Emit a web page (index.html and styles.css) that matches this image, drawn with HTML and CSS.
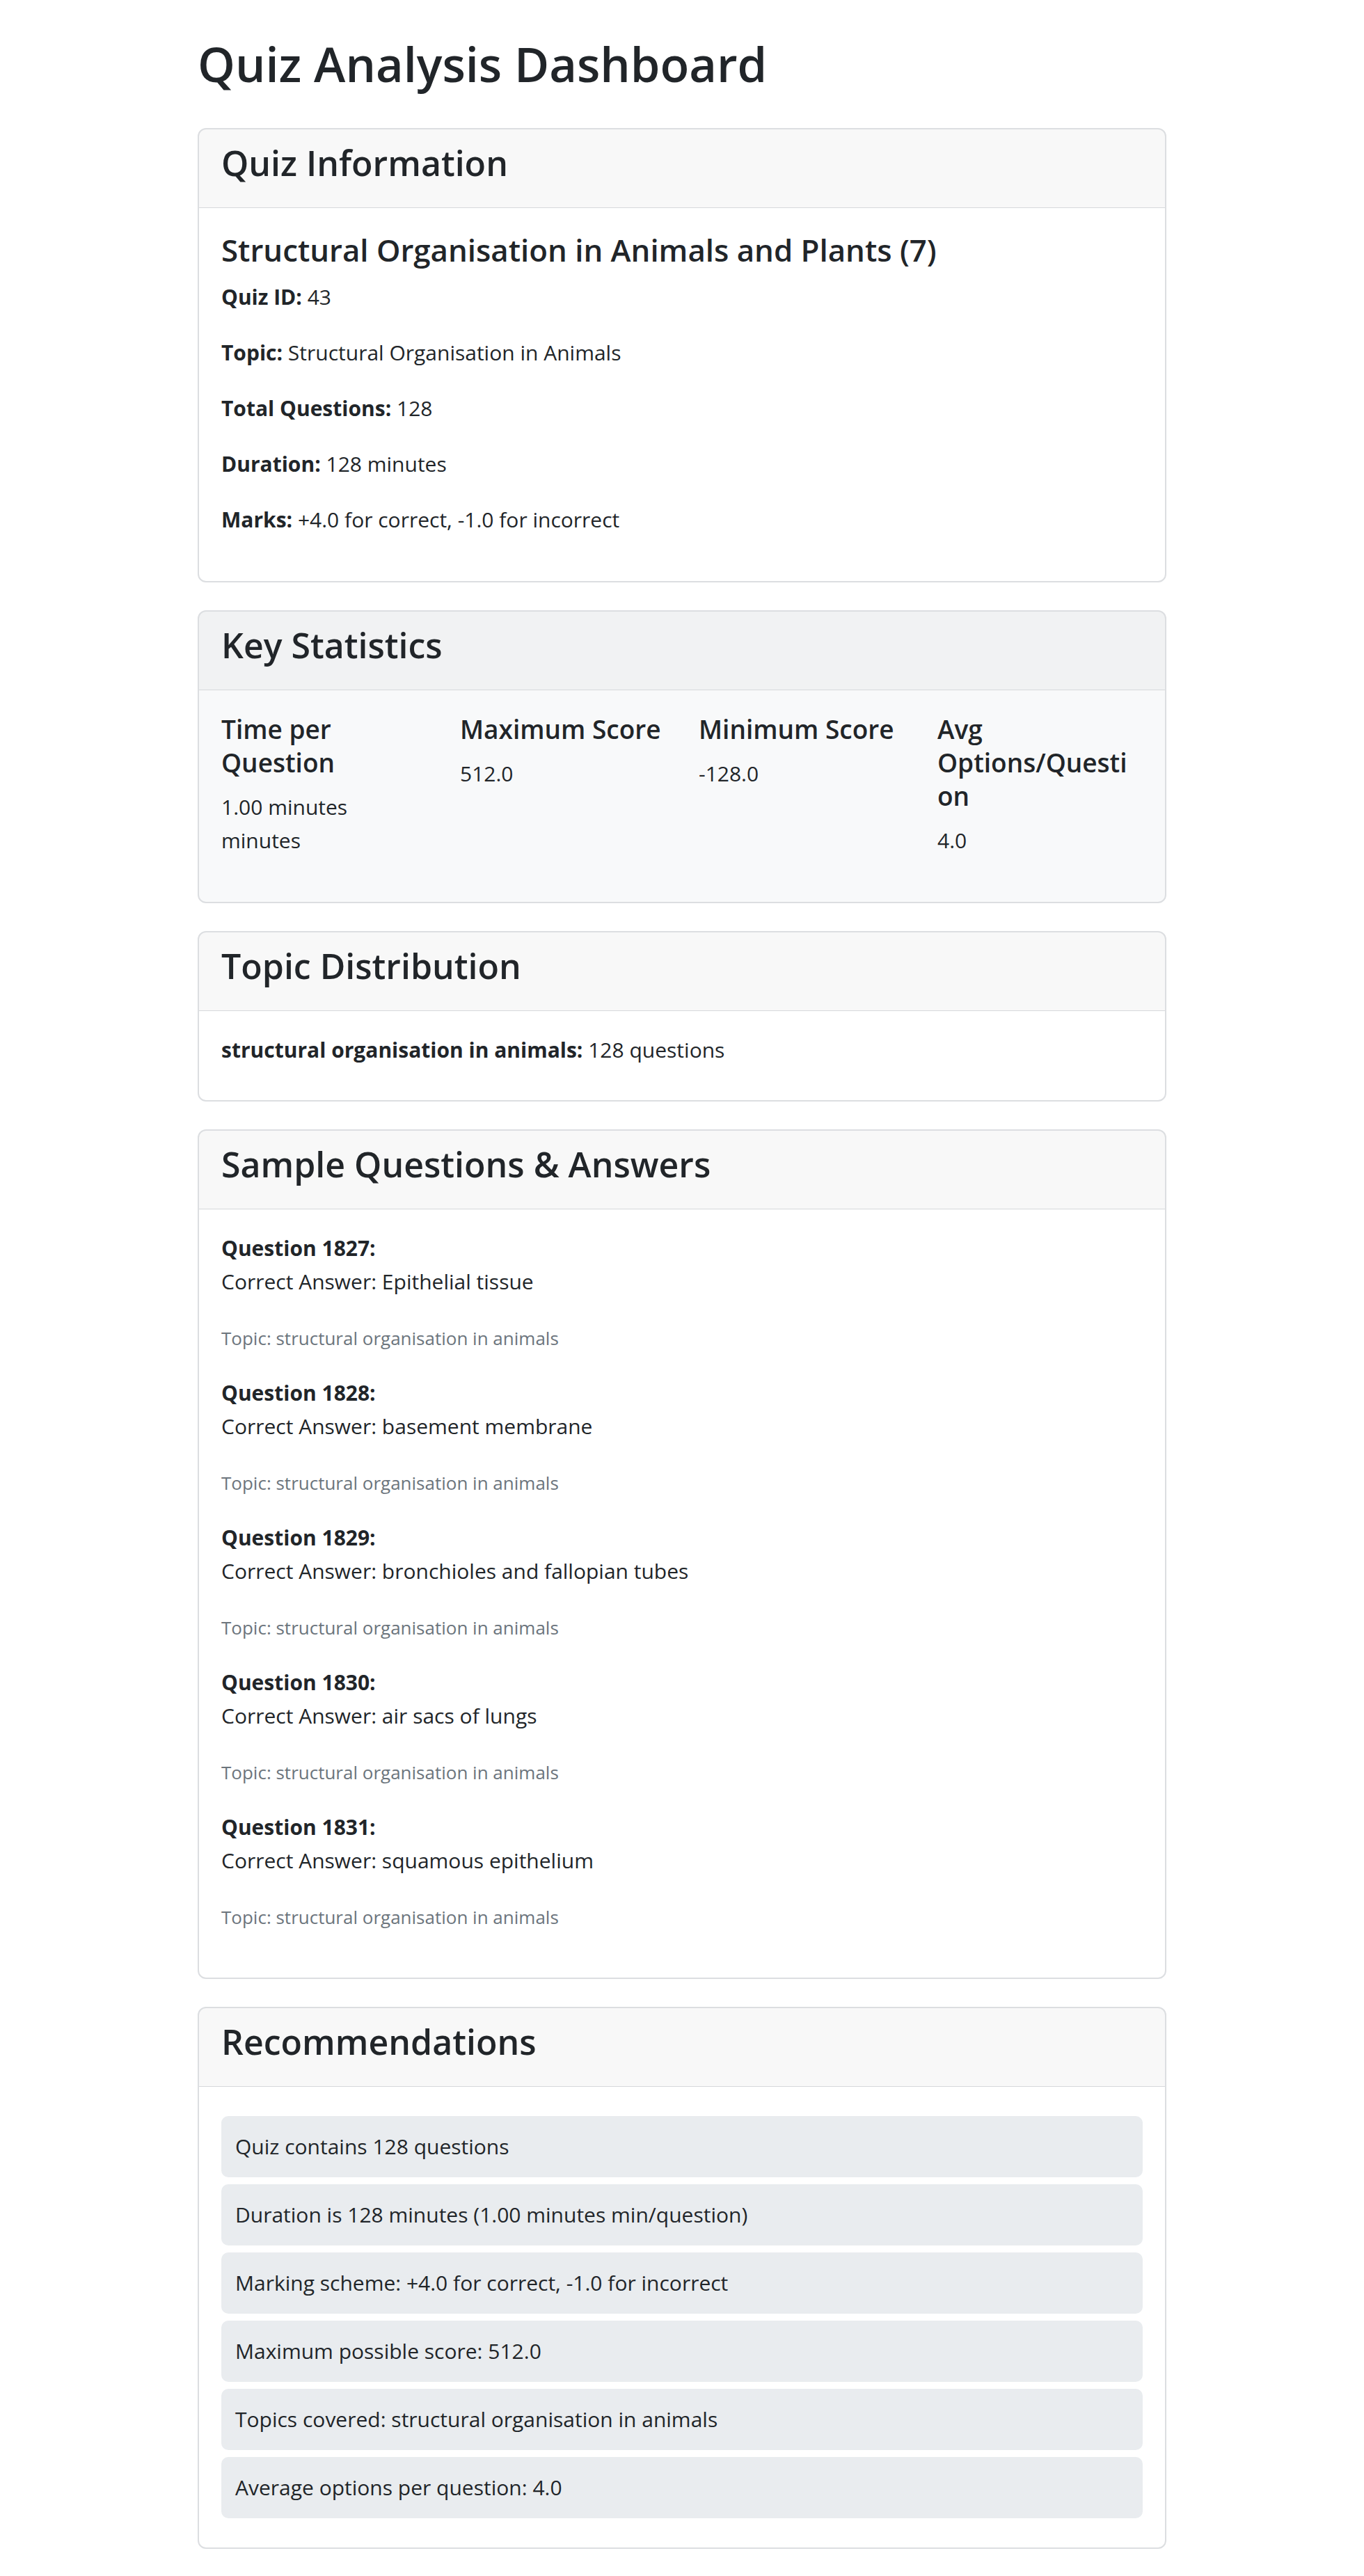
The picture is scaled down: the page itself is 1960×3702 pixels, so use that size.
FILE: index.html
```html
<!DOCTYPE html>
<html lang="en">
<head>
<meta charset="utf-8">
<title>Quiz Analysis Dashboard</title>
<link rel="stylesheet" href="styles.css">
</head>
<body>
<div class="dashboard">
  <h1 class="page-title">Quiz Analysis Dashboard</h1>

  <section class="card">
    <div class="card-header"><h3 class="card-title">Quiz Information</h3></div>
    <div class="card-body">
      <h4 class="quiz-name">Structural Organisation in Animals and Plants (7)</h4>
      <p class="line"><strong>Quiz ID:</strong> 43</p>
      <p class="line"><strong>Topic:</strong> Structural Organisation in Animals</p>
      <p class="line"><strong>Total Questions:</strong> 128</p>
      <p class="line"><strong>Duration:</strong> 128 minutes</p>
      <p class="line"><strong>Marks:</strong> +4.0 for correct, -1.0 for incorrect</p>
    </div>
  </section>

  <section class="card card-light">
    <div class="card-header"><h3 class="card-title">Key Statistics</h3></div>
    <div class="card-body">
      <div class="stats-row">
        <div class="stat">
          <h5 class="stat-label">Time per Question</h5>
          <p class="line">1.00 minutes minutes</p>
        </div>
        <div class="stat">
          <h5 class="stat-label">Maximum Score</h5>
          <p class="line">512.0</p>
        </div>
        <div class="stat">
          <h5 class="stat-label">Minimum Score</h5>
          <p class="line">-128.0</p>
        </div>
        <div class="stat">
          <h5 class="stat-label">Avg Options/Question</h5>
          <p class="line">4.0</p>
        </div>
      </div>
    </div>
  </section>

  <section class="card">
    <div class="card-header"><h3 class="card-title">Topic Distribution</h3></div>
    <div class="card-body">
      <div class="topic-line"><strong>structural organisation in animals:</strong> 128 questions</div>
    </div>
  </section>

  <section class="card">
    <div class="card-header"><h3 class="card-title">Sample Questions &amp; Answers</h3></div>
    <div class="card-body">
      <div class="qa">
        <p class="line"><strong>Question 1827:</strong><br>Correct Answer: Epithelial tissue</p>
        <p class="line qa-topic"><small class="muted">Topic: structural organisation in animals</small></p>
      </div>
      <div class="qa">
        <p class="line"><strong>Question 1828:</strong><br>Correct Answer: basement membrane</p>
        <p class="line qa-topic"><small class="muted">Topic: structural organisation in animals</small></p>
      </div>
      <div class="qa">
        <p class="line"><strong>Question 1829:</strong><br>Correct Answer: bronchioles and fallopian tubes</p>
        <p class="line qa-topic"><small class="muted">Topic: structural organisation in animals</small></p>
      </div>
      <div class="qa">
        <p class="line"><strong>Question 1830:</strong><br>Correct Answer: air sacs of lungs</p>
        <p class="line qa-topic"><small class="muted">Topic: structural organisation in animals</small></p>
      </div>
      <div class="qa">
        <p class="line"><strong>Question 1831:</strong><br>Correct Answer: squamous epithelium</p>
        <p class="line qa-topic"><small class="muted">Topic: structural organisation in animals</small></p>
      </div>
    </div>
  </section>

  <section class="card">
    <div class="card-header"><h3 class="card-title">Recommendations</h3></div>
    <div class="card-body">
      <ul class="recs">
        <li class="rec">Quiz contains 128 questions</li>
        <li class="rec">Duration is 128 minutes (1.00 minutes min/question)</li>
        <li class="rec">Marking scheme: +4.0 for correct, -1.0 for incorrect</li>
        <li class="rec">Maximum possible score: 512.0</li>
        <li class="rec">Topics covered: structural organisation in animals</li>
        <li class="rec">Average options per question: 4.0</li>
      </ul>
    </div>
  </section>
</div>
</body>
</html>
```

FILE: styles.css
```css
html, body {
  margin: 0;
  padding: 0;
  background: #ffffff;
}

body {
  font-family: "Open Sans", "Noto Sans", sans-serif;
  font-size: 30px;
  line-height: 48px;
  color: #212529;
}

.dashboard {
  width: 1392px;
  margin: 0 auto;
  padding-top: 48px;
}

.page-title {
  margin: 0 0 48px;
  font-size: 68.5px;
  line-height: 88px;
  font-weight: 600;
}

.card {
  border: 2px solid #dcdee1;
  border-radius: 12px;
  background: #ffffff;
  margin-bottom: 40px;
  overflow: hidden;
  overflow-wrap: break-word;
}

.card-light {
  background: #f8f9fa;
}

.card-header {
  padding: 16px 32px;
  background: rgba(33, 37, 41, 0.03);
  border-bottom: 1px solid #d6d8db;
}

.card-title {
  margin: 0 0 16px;
  font-size: 50px;
  line-height: 64px;
  font-weight: 600;
}

.card-body {
  padding: 32px;
}

.quiz-name {
  margin: 0 0 16px;
  font-size: 43.8px;
  line-height: 56px;
  font-weight: 600;
}

.line {
  margin: 0 0 32px;
}

.qa-topic {
  margin-bottom: 31px;
}

strong {
  font-weight: 700;
}

.stats-row {
  display: grid;
  grid-template-columns: repeat(4, minmax(0, 1fr));
  column-gap: 48px;
}

.stat-label {
  margin: 0 0 16px;
  padding-right: 4px;
  font-size: 37px;
  line-height: 48px;
  font-weight: 600;
}

.topic-line {
  margin-bottom: 16px;
}

.muted {
  font-size: 26px;
  color: #6c757d;
}

.recs {
  list-style: none;
  margin: 0;
  padding: 0;
}

.rec {
  background: #e9ecef;
  border-radius: 10px;
  padding: 20px;
  margin: 10px 0;
}
```
